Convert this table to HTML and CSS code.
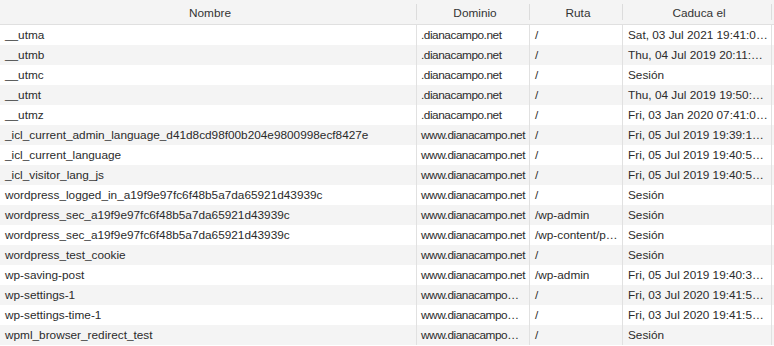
FILE: index.html
```html
<!DOCTYPE html>
<html lang="es">
    <head>
        <meta charset="utf-8">
        <title>Cookies</title>
        <link rel="stylesheet" href="styles.css">
    </head>
    <body>
        <div class="cookies">
            <div class="row head">
                <div class="cell">Nombre</div>
                <div class="cell">Dominio</div>
                <div class="cell">Ruta</div>
                <div class="cell">Caduca el</div>
                <div class="cell"></div>
            </div>
            <div class="row"><div class="cell">__utma</div><div class="cell domain">.dianacampo.net</div><div class="cell">/</div><div class="cell">Sat, 03 Jul 2021 19:41:01 GMT</div><div class="cell"></div></div>
            <div class="row"><div class="cell">__utmb</div><div class="cell domain">.dianacampo.net</div><div class="cell">/</div><div class="cell">Thu, 04 Jul 2019 20:11:01 GMT</div><div class="cell"></div></div>
            <div class="row"><div class="cell">__utmc</div><div class="cell domain">.dianacampo.net</div><div class="cell">/</div><div class="cell">Sesión</div><div class="cell"></div></div>
            <div class="row"><div class="cell">__utmt</div><div class="cell domain">.dianacampo.net</div><div class="cell">/</div><div class="cell">Thu, 04 Jul 2019 19:50:59 GMT</div><div class="cell"></div></div>
            <div class="row"><div class="cell">__utmz</div><div class="cell domain">.dianacampo.net</div><div class="cell">/</div><div class="cell">Fri, 03 Jan 2020 07:41:01 GMT</div><div class="cell"></div></div>
            <div class="row"><div class="cell">_icl_current_admin_language_d41d8cd98f00b204e9800998ecf8427e</div><div class="cell domain">www.dianacampo.net</div><div class="cell">/</div><div class="cell">Fri, 05 Jul 2019 19:39:14 GMT</div><div class="cell"></div></div>
            <div class="row"><div class="cell">_icl_current_language</div><div class="cell domain">www.dianacampo.net</div><div class="cell">/</div><div class="cell">Fri, 05 Jul 2019 19:40:55 GMT</div><div class="cell"></div></div>
            <div class="row"><div class="cell">_icl_visitor_lang_js</div><div class="cell domain">www.dianacampo.net</div><div class="cell">/</div><div class="cell">Fri, 05 Jul 2019 19:40:55 GMT</div><div class="cell"></div></div>
            <div class="row"><div class="cell">wordpress_logged_in_a19f9e97fc6f48b5a7da65921d43939c</div><div class="cell domain">www.dianacampo.net</div><div class="cell">/</div><div class="cell">Sesión</div><div class="cell"></div></div>
            <div class="row"><div class="cell">wordpress_sec_a19f9e97fc6f48b5a7da65921d43939c</div><div class="cell domain">www.dianacampo.net</div><div class="cell">/wp-admin</div><div class="cell">Sesión</div><div class="cell"></div></div>
            <div class="row"><div class="cell">wordpress_sec_a19f9e97fc6f48b5a7da65921d43939c</div><div class="cell domain">www.dianacampo.net</div><div class="cell">/wp-content/plugins</div><div class="cell">Sesión</div><div class="cell"></div></div>
            <div class="row"><div class="cell">wordpress_test_cookie</div><div class="cell domain">www.dianacampo.net</div><div class="cell">/</div><div class="cell">Sesión</div><div class="cell"></div></div>
            <div class="row"><div class="cell">wp-saving-post</div><div class="cell domain">www.dianacampo.net</div><div class="cell">/wp-admin</div><div class="cell">Fri, 05 Jul 2019 19:40:38 GMT</div><div class="cell"></div></div>
            <div class="row"><div class="cell">wp-settings-1</div><div class="cell domain">www.dianacampo…</div><div class="cell">/</div><div class="cell">Fri, 03 Jul 2020 19:41:55 GMT</div><div class="cell"></div></div>
            <div class="row"><div class="cell">wp-settings-time-1</div><div class="cell domain">www.dianacampo…</div><div class="cell">/</div><div class="cell">Fri, 03 Jul 2020 19:41:55 GMT</div><div class="cell"></div></div>
            <div class="row"><div class="cell">wpml_browser_redirect_test</div><div class="cell domain">www.dianacampo…</div><div class="cell">/</div><div class="cell">Sesión</div><div class="cell"></div></div>
        </div>
    </body>
</html>
```

FILE: styles.css
```css
body{
    margin:0;
    font-family:"Liberation Sans",Arial,sans-serif;
    font-size:11.8px;
    color:#2b2b2b;
    background-color:#fff;
}
.cookies{
    width:774px;
}
.row{
    display:grid;
    grid-template-columns:417px 113px 93px 149px 1fr;
    height:20px;
    line-height:20px;
}
.row:nth-child(odd){
    background-color:#f4f4f4;
}
.cell{
    padding:0 2px 0 5px;
    border-right:1px solid #e1e1e1;
    white-space:nowrap;
    overflow:hidden;
    text-overflow:ellipsis;
}
.domain{
    letter-spacing:-0.45px;
    padding-left:4px;
    padding-right:1px;
}
.row .cell:last-child{
    border-right:none;
}
.head{
    height:24px;
    background-color:#f6f6f6;
    border-bottom:1px solid #e0e0e0;
    color:#333;
}
.head .cell{
    padding-top:3px;
    line-height:21px;
    text-align:center;
    border-right:none;
    background:linear-gradient(#dcdcdc,#dcdcdc) right 4px / 1px 16px no-repeat;
}
.head .cell:last-child{
    background:none;
}
```
